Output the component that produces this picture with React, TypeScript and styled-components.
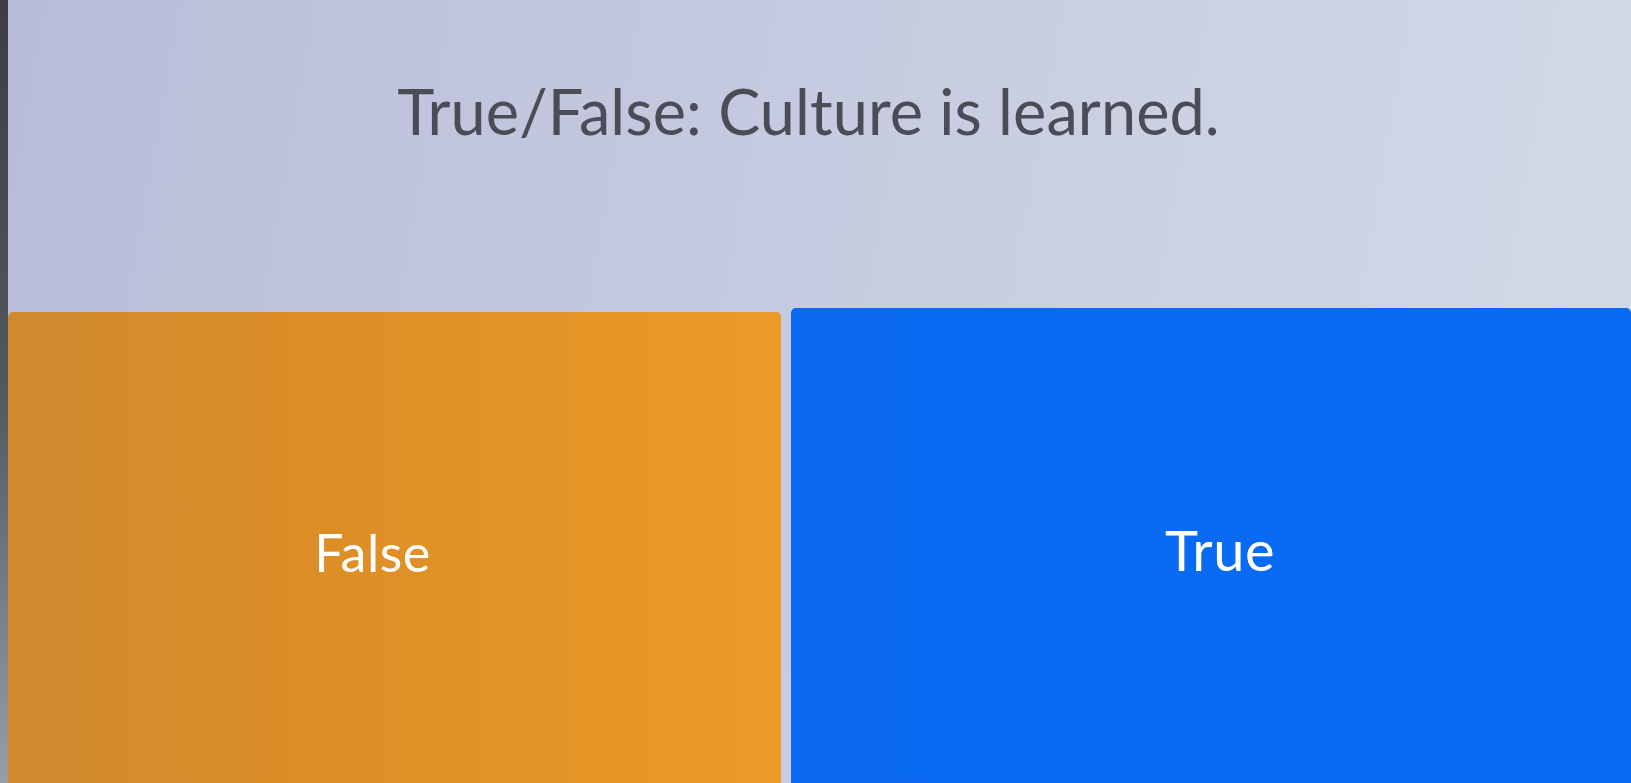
import React from 'react';
import styled, { createGlobalStyle } from 'styled-components';

const GlobalStyle = createGlobalStyle`
  html, body {
    margin: 0;
    padding: 0;
    width: 1631px;
    height: 783px;
    overflow: hidden;
  }
  body {
    font-family: Lato, "Noto Sans", sans-serif;
  }
`;

const Screen = styled.div`
  display: flex;
  width: 1631px;
  height: 783px;
  background: linear-gradient(100deg, #b8bcd7 0%, #c6cae0 45%, #d4dae7 100%);
`;

const Bezel = styled.div`
  width: 8px;
  flex-shrink: 0;
  background: linear-gradient(180deg, #3c3d45 0%, #55575f 50%, #9a9ca8 100%);
`;

const Main = styled.div`
  flex: 1;
  display: flex;
  flex-direction: column;
`;

const Header = styled.div`
  height: 308px;
  display: flex;
  justify-content: center;
  padding-right: 22px;
  box-sizing: border-box;
`;

const Title = styled.h1`
  margin: 76px 0 0;
  font-size: 63px;
  font-weight: 400;
  line-height: 1.1;
  color: #4b4c58;
  letter-spacing: 0.1px;
`;

const Answers = styled.div`
  flex: 1;
  display: flex;
  gap: 10px;
`;

const Answer = styled.button<{ $bg: string; $offset: number; $width: string; $left: number; $right: number; $size: number }>`
  flex: ${p => p.$width};
  margin-top: ${p => p.$offset}px;
  border: none;
  border-radius: 5px 5px 0 0;
  background: ${p => p.$bg};
  display: flex;
  align-items: center;
  justify-content: center;
  padding: 0 ${p => p.$right}px 0 ${p => p.$left}px;
  font-family: Lato, "Noto Sans", sans-serif;
  font-size: ${p => p.$size}px;
  font-weight: 400;
  color: #ffffff;
  cursor: pointer;
`;

const Label = styled.span`
  margin-top: 8px;
  letter-spacing: 0.5px;
`;

export default function App() {
  return (
    <>
      <GlobalStyle />
      <Screen>
        <Bezel />
        <Main>
          <Header>
            <Title>True/False: Culture is learned.</Title>
          </Header>
          <Answers>
            <Answer
              $bg="linear-gradient(90deg, #cf8a30 0%, #dc8e26 40%, #eb9b27 100%)"
              $offset={4}
              $width="0 0 773px"
              $left={0}
              $right={44}
              $size={52}
            >
              <Label>False</Label>
            </Answer>
            <Answer
              $bg="linear-gradient(90deg, #0b6af0 0%, #076bf6 100%)"
              $offset={0}
              $width="1"
              $left={18}
              $right={0}
              $size={56}
            >
              <Label>True</Label>
            </Answer>
          </Answers>
        </Main>
      </Screen>
    </>
  );
}
